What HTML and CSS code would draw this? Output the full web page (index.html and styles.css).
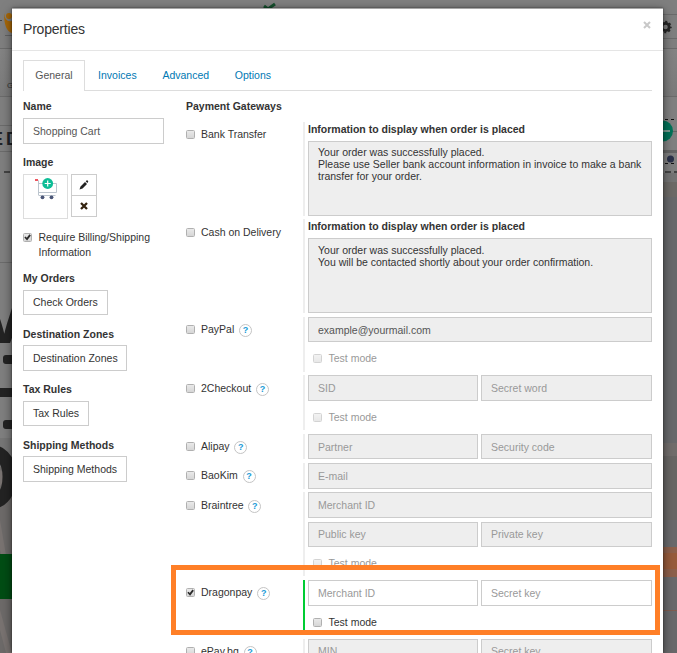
FILE: index.html
```html
<!DOCTYPE html>
<html lang="en">
<head>
<meta charset="utf-8">
<title>Properties</title>
<link rel="stylesheet" href="styles.css">
</head>
<body>
<svg class="backdrop" width="677" height="653" viewBox="0 0 677 653" aria-hidden="true">
  <defs>
    <linearGradient id="bar" x1="0" y1="0" x2="0" y2="1"><stop offset="0" stop-color="#848484"/><stop offset="1" stop-color="#7a7a7a"/></linearGradient>
  </defs>
  <rect width="677" height="653" fill="#7f7f7f"/>
  <rect y="48" width="677" height="48" fill="url(#bar)"/>
  <g fill="#6b6b6b">
    <rect y="48" width="12" height="1"/><rect y="96" width="12" height="1"/><rect y="125" width="12" height="1"/><rect y="151" width="12" height="1"/><rect y="262" width="12" height="1"/>
    <rect x="663" y="14" width="14" height="1"/><rect x="663" y="38" width="14" height="1"/><rect x="663" y="48" width="14" height="1"/><rect x="663" y="96" width="14" height="1"/>
  </g>
  <path d="M264 6l4 3 7-5" fill="none" stroke="#154f2d" stroke-width="3"/>
  <circle cx="9" cy="16" r="3" fill="#a86808"/>
  <path d="M4 13q1 10 8 8v12q-8-2-8-20z" fill="#a86808"/>
  <rect x="5" y="35" width="8" height="1" fill="#626262"/>
  <rect x="0" y="20" width="2" height="1" fill="#444"/>
  <text x="7" y="88" font-size="8" fill="#303030">G</text>
  <text x="-9" y="144.500" font-size="18" font-weight="bold" fill="#1f2227">E</text>
  <text x="6" y="144.500" font-size="18" font-weight="bold" fill="#1f2227">D</text>
  <rect x="4" y="171" width="6" height="2" fill="#444"/>
  <rect y="438" width="12" height="29" fill="#767676"/>
  <rect y="467" width="12" height="186" fill="#6d6a69"/>
  <path d="M0 470l12 10v15l-12-10zM0 520l12 70v14L0 550zM0 610l12 43h-6L0 630z" fill="#797371"/>
  <text class="poster" x="-22.500" y="343" font-size="80">V</text>
  <g fill="#232323">
    <rect x="3" y="355" width="15" height="9" rx="3"/><rect x="0" y="388" width="12" height="9"/><rect x="3" y="420" width="15" height="9" rx="3"/>
  </g>
  <text class="poster" x="-54" y="510" font-size="96">O</text>
  <rect y="554" width="12" height="45" fill="#004d14"/>
  <rect x="663" y="97" width="14" height="53" fill="#808080"/>
  <rect x="663" y="150" width="14" height="3" fill="#646464"/>
  <rect x="663" y="173" width="14" height="9" fill="#747474"/>
  <rect x="663" y="182" width="14" height="15" fill="#6d6a67"/>
  <rect x="663" y="197" width="14" height="246" fill="#68696b"/>
  <rect x="663" y="443" width="14" height="13" fill="#716d6b"/>
  <rect x="663" y="456" width="14" height="64" fill="#686664"/>
  <rect x="663" y="520" width="14" height="133" fill="#69696b"/>
  <rect x="663" y="547" width="14" height="30" fill="#8d604b"/>
  <rect x="663" y="553" width="14" height="16" fill="#975b3b"/>
  <rect x="663" y="610" width="14" height="1" fill="#805d50"/>
  <path d="M663 119.500h14M663 163.500h14" stroke="#111" stroke-dasharray="3 3" stroke-dashoffset="4"/>
  <path d="M663 131.500h14" stroke="#666"/>
  <circle cx="662.500" cy="131" r="10.500" fill="#007258"/>
  <rect x="658" y="130" width="12" height="2" fill="#799a90"/>
  <circle cx="670.500" cy="159" r="3.500" fill="#2a3049"/>
  <path d="M665 172h6m3 0h3" stroke="#444" stroke-width="2"/>
  <circle cx="665.500" cy="27" r="3.700" fill="none" stroke="#252525" stroke-width="2.800"/>
  <circle cx="665.500" cy="27" r="5.400" fill="none" stroke="#252525" stroke-width="1.600" stroke-dasharray="2.100 2.140" stroke-dashoffset="1"/>
</svg>

<section class="modal">
  <header class="modal-header">
    <h1>Properties</h1>
    <button class="close" aria-label="Close"><svg width="8" height="8" viewBox="0 0 8 8"><path d="M1 1l6 6M7 1l-6 6" stroke="#c8c8c8" stroke-width="2"/></svg></button>
  </header>
  <div class="modal-body">
    <nav class="tabs">
      <a class="tab active">General</a><a class="tab">Invoices</a><a class="tab">Advanced</a><a class="tab">Options</a>
    </nav>
    <div class="columns">
      <div class="settings">
        <div class="group"><h2>Name</h2><input class="field name" type="text" value="Shopping Cart"></div>
        <div class="group image-group"><h2 class="low">Image</h2>
          <div class="image-row">
            <div class="thumb">
              <svg width="43" height="43" viewBox="0 0 43 43">
                <path d="M11 5.500h3.500v14.500M14.500 8.500h18v9h-18M14.500 20.500h17" fill="none" stroke="#bcc5ce"/>
                <rect x="11" y="4" width="3" height="2" fill="#ef5660"/>
                <circle cx="18.500" cy="22.300" r="1.900" fill="#4b5677"/><circle cx="27.500" cy="22.300" r="1.900" fill="#4b5677"/>
                <circle cx="23.700" cy="8.500" r="5.400" fill="#0dbd96"/><path d="M20.700 8.500h6M23.700 5.500v6" stroke="#fff" stroke-width="1.200"/>
              </svg>
            </div>
            <div class="tools">
              <button aria-label="Edit"><svg width="10" height="10" viewBox="0 0 10 10"><path d="M.5 9.500l1-3L6 2l2 2-4.500 4.500zM6.700 1.300l.8-.8q.8-.4 1.400.2t.2 1.400l-.8.8z" fill="#222"/></svg></button>
              <button aria-label="Remove"><svg width="8" height="8" viewBox="0 0 8 8"><path d="M1 1l6 6M7 1l-6 6" stroke="#33230f" stroke-width="2.300"/></svg></button>
            </div>
          </div>
        </div>
        <label class="require"><input type="checkbox" checked><span>Require Billing/Shipping Information</span></label>
        <div class="group"><h2>My Orders</h2><button class="btn">Check Orders</button></div>
        <div class="group"><h2 class="low">Destination Zones</h2><button class="btn tight">Destination Zones</button></div>
        <div class="group"><h2>Tax Rules</h2><button class="btn">Tax Rules</button></div>
        <div class="group"><h2 class="low">Shipping Methods</h2><button class="btn">Shipping Methods</button></div>
      </div>

      <div class="gateways">
        <h2>Payment Gateways</h2>
        <div class="gateway">
          <label class="pick"><input type="checkbox">Bank Transfer</label>
          <div class="options info"><h3>Information to display when order is placed</h3>
            <div class="note">Your order was successfully placed.<br>Please use Seller bank account information in invoice to make a bank transfer for your order.</div></div>
        </div>
        <div class="gateway">
          <label class="pick"><input type="checkbox">Cash on Delivery</label>
          <div class="options info"><h3>Information to display when order is placed</h3>
            <div class="note">Your order was successfully placed.<br>You will be contacted shortly about your order confirmation.</div></div>
        </div>
        <div class="gateway">
          <label class="pick"><input type="checkbox">PayPal<span class="help">?</span></label>
          <div class="options"><input class="field wide" value="example@yourmail.com" disabled>
            <label class="test"><input type="checkbox" disabled>Test mode</label></div>
        </div>
        <div class="gateway">
          <label class="pick"><input type="checkbox">2Checkout<span class="help">?</span></label>
          <div class="options"><input class="field" placeholder="SID" disabled><input class="field" placeholder="Secret word" disabled>
            <label class="test"><input type="checkbox" disabled>Test mode</label></div>
        </div>
        <div class="gateway">
          <label class="pick"><input type="checkbox">Alipay<span class="help">?</span></label>
          <div class="options"><input class="field" placeholder="Partner" disabled><input class="field" placeholder="Security code" disabled></div>
        </div>
        <div class="gateway">
          <label class="pick"><input type="checkbox">BaoKim<span class="help">?</span></label>
          <div class="options"><input class="field wide" placeholder="E-mail" disabled></div>
        </div>
        <div class="gateway">
          <label class="pick"><input type="checkbox">Braintree<span class="help">?</span></label>
          <div class="options"><input class="field wide" placeholder="Merchant ID" disabled><input class="field" placeholder="Public key" disabled><input class="field" placeholder="Private key" disabled>
            <label class="test"><input type="checkbox" disabled>Test mode</label></div>
        </div>
        <div class="gateway enabled">
          <label class="pick"><input type="checkbox" checked>Dragonpay<span class="help">?</span></label>
          <div class="options"><input class="field" placeholder="Merchant ID"><input class="field" placeholder="Secret key">
            <label class="test"><input type="checkbox">Test mode</label></div>
          <div class="highlight"></div>
        </div>
        <div class="gateway">
          <label class="pick"><input type="checkbox">ePay.bg<span class="help">?</span></label>
          <div class="options"><input class="field" placeholder="MIN" disabled><input class="field" placeholder="Secret key" disabled></div>
        </div>
      </div>
    </div>
  </div>
</section>
</body>
</html>
```
FILE: styles.css
```css
* { box-sizing: border-box; }
html, body { margin: 0; height: 653px; overflow: hidden; }
body {
  display: flow-root;
  font: 10.5px/15px "Liberation Sans", Arial, sans-serif;
  color: #333;
  background: #7f7f7f;
  position: relative;
}
button, input { font: inherit; color: inherit; margin: 0; border-radius: 0; }
h1, h2, h3 { margin: 0; }

.backdrop { position: absolute; inset: 0; }
.backdrop text { font-family: "Liberation Sans", sans-serif; }
.backdrop .poster { font-weight: bold; fill: #232323; }

.modal {
  position: relative;
  width: 651px;
  height: 645px;
  overflow: hidden;
  margin: 8px 0 0 12px;
  background: #fff;
  border-top: 1px solid #a5a5a5;
  box-shadow: 0 3px 10px rgba(0, 0, 0, .5), 0 0 2px rgba(0, 0, 0, .5);
}
.modal-header {
  display: flex;
  justify-content: space-between;
  height: 42px;
  padding: 0 12px 0 11px;
  border-bottom: 1px solid #e5e5e5;
}
.modal-header h1 { font-size: 14px; font-weight: normal; line-height: 41px; letter-spacing: -.2px; }
.close { display: flex; padding: 12px 0 0; border: 0; background: none; align-self: flex-start; }
.modal-body { padding: 9px 11px 0; }

.tabs { display: flex; height: 31px; border-bottom: 1px solid #ddd; }
.tab { height: 31px; padding: 0 11.5px; margin-right: .75px; border: 1px solid transparent; border-bottom: 0; color: #0078b3; line-height: 29px; }
.tab.active { padding: 0 11.25px; border-color: #ddd; background: #fff; color: #555; }

.columns { display: flex; padding-top: 3.75px; }
.settings { width: 163px; flex: none; }
.gateways { width: 466px; flex: none; }
h2, h3 { font-size: 10.5px; font-weight: bold; }
h2 { line-height: 23.25px; height: 23.25px; }
h2.low { line-height: 24px; }
.group { height: 55.5px; }
.image-group { height: 79.25px; }

.btn, .field {
  display: block;
  height: 25.5px;
  border: 1px solid #ccc;
  background: #fff;
  padding: 0 9px;
  outline: 0;
}
.btn.tight { padding-right: 8.5px; }
.field { min-width: 0; color: #555; }
.field::placeholder { color: #999; opacity: 1; }
.field:disabled { background: #eee; }
.name { width: 141px; }

.image-row { display: flex; gap: 3px; }
.thumb { width: 45px; height: 45px; border: 1px solid #ddd; }
.thumb svg { display: block; }
.tools { width: 26px; }
.tools button { display: flex; align-items: center; justify-content: center; width: 26px; height: 22px; padding: 0; border: 1px solid #ccc; background: #fff; }
.tools button + button { margin-top: -1px; }

.require { display: flex; gap: 6.5px; height: 37px; }
.require input { margin-top: 3.5px; }
.require span { width: 120px; }

input[type="checkbox"] {
  appearance: none;
  flex: none;
  width: 9px;
  height: 9px;
  border: 1px solid #b0b0b0;
  border-radius: 1.5px;
  background: linear-gradient(#e9e9e9, #d6d6d6);
}
input[type="checkbox"]:disabled { opacity: .55; }
input[type="checkbox"]:checked::after {
  content: "";
  display: block;
  width: 7px;
  height: 7px;
  background: #2b2b2b;
  clip-path: polygon(5% 50%, 22% 36%, 40% 54%, 78% 4%, 98% 20%, 44% 92%);
}

.gateways h2 { margin-bottom: 3.75px; }
.gateway { display: flex; position: relative; margin-bottom: 3.75px; }
.pick { display: flex; align-items: center; width: 117px; height: 25.5px; gap: 6px; }
.help {
  width: 13px;
  height: 13px;
  margin: 2px 0 0 -1.25px;
  border: 1px solid #c4c4c4;
  border-radius: 50%;
  color: #1a9bd7;
  font-size: 9px;
  font-weight: bold;
  line-height: 11px;
  text-align: center;
}
.options {
  display: grid;
  grid-template-columns: 170px 171px;
  grid-auto-rows: 25.5px;
  gap: 3.75px 3px;
  width: 349px;
  padding-left: 3px;
  border-left: 2px solid #eee;
}
.wide, .test { grid-column: 1 / -1; }
.test { display: flex; align-items: center; gap: 6.5px; padding-left: 5px; }
.test:has(:disabled) { color: #999; }
.info { display: block; }
.info h3 { height: 18.75px; line-height: 15px; }
.note { height: 75px; padding: 4.5px 9px; border: 1px solid #ccc; background: #eee; line-height: 12px; }
.enabled .options { border-color: #0c3; }
.highlight { position: absolute; left: -15px; top: -15px; width: 489px; height: 70px; border: 5px solid #ff7f27; }
```
